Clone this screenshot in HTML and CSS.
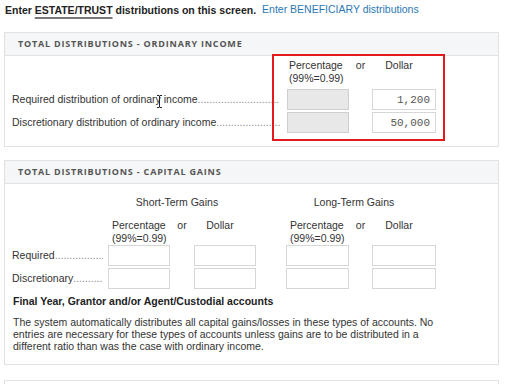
FILE: index.html
```html
<!DOCTYPE html>
<html lang="en">
<head>
    <meta charset="UTF-8">
    <title>Distributions</title>
    <link rel="stylesheet" href="styles.css">
</head>
<body>
<div class="page">
    <p class="intro"><b>Enter <span class="uline">ESTATE/TRUST</span> distributions on this screen.</b><a href="#">Enter BENEFICIARY distributions</a></p>

    <div class="panel">
        <div class="panel-head">TOTAL DISTRIBUTIONS - ORDINARY INCOME</div>
        <div class="panel-body ordinary">
            <div class="grid grid-ord">
                <span></span>
                <span class="col-pct">Percentage<br>(99%=0.99)</span>
                <span class="col-or">or</span>
                <span class="col-dol">Dollar</span>

                <label class="lead">Required distribution of ordinary income</label>
                <input type="text" class="pct" disabled>
                <span></span>
                <input type="text" value="1,200">

                <label class="lead">Discretionary distribution of ordinary income</label>
                <input type="text" class="pct" disabled>
                <span></span>
                <input type="text" value="50,000">
            </div>
            <div class="highlight"></div>
            <svg class="ibeam" width="7" height="13" viewBox="0 0 7 13"><path d="M1 .5h2l.5.5.5-.5h2M3.5 1v11M1 12.5h2l.5-.5.5.5h2" fill="none" stroke="#222" stroke-width="1"/></svg>
        </div>
    </div>

    <div class="panel">
        <div class="panel-head">TOTAL DISTRIBUTIONS - CAPITAL GAINS</div>
        <div class="panel-body">
            <div class="grid grid-cap">
                <span></span>
                <span class="group short">Short-Term Gains</span>
                <span></span>
                <span class="group long">Long-Term Gains</span>

                <span></span>
                <span class="col-pct">Percentage<br>(99%=0.99)</span>
                <span class="col-or">or</span>
                <span class="col-dol">Dollar</span>
                <span></span>
                <span class="col-pct">Percentage<br>(99%=0.99)</span>
                <span class="col-or">or</span>
                <span class="col-dol">Dollar</span>

                <label class="lead">Required</label>
                <input type="text">
                <span></span>
                <input type="text">
                <span></span>
                <input type="text">
                <span></span>
                <input type="text">

                <label class="lead">Discretionary</label>
                <input type="text">
                <span></span>
                <input type="text">
                <span></span>
                <input type="text">
                <span></span>
                <input type="text">
            </div>
            <h4>Final Year, Grantor and/or Agent/Custodial accounts</h4>
            <p class="note">The system automatically distributes all capital gains/losses in these types of accounts. No entries are necessary for these types of accounts unless gains are to be distributed in a different ratio than was the case with ordinary income.</p>
        </div>
    </div>

    <div class="panel panel-next"></div>
</div>
</body>
</html>
```

FILE: styles.css
```css
body {
    font-family: "Liberation Sans", Arial, sans-serif;
    font-size: 10.5px;
    color: #333;
    background: #fff;
    margin: 0;
    padding: 0;
}
.page {
    padding: 2px 0 0 4px;
    width: 495px;
}
.intro {
    margin: 0 0 14px 1px;
    line-height: 16px;
    color: #222;
}
.uline {
    text-decoration: underline;
    text-decoration-color: #777;
    text-decoration-thickness: 2px;
    text-underline-offset: 3px;
}
.intro a {
    color: #2b78b4;
    text-decoration: none;
    margin-left: 6px;
    position: relative;
    top: -1px;
}
.panel {
    border: 1px solid #e2e2e2;
    margin-bottom: 13px;
}
.panel-head {
    background: #f5f6f8;
    border-bottom: 1px solid #e2e2e2;
    height: 22px;
    line-height: 22px;
    padding-left: 13px;
    font-family: "Open Sans", sans-serif;
    font-weight: 700;
    font-size: 9px;
    letter-spacing: 0.8px;
    color: #555;
}
.panel-body {
    position: relative;
    padding: 12px 7px 12px;
}
.panel-body.ordinary {
    padding: 3px 7px 13px;
}
.grid {
    display: grid;
    line-height: 13px;
    align-items: center;
}
.grid-ord {
    grid-template-columns: 275px 62px 23px 64px;
    grid-template-rows: 28px 21px 21px;
    row-gap: 2px;
}
.grid-ord > .col-pct,
.grid-ord > .col-or,
.grid-ord > .col-dol {
    align-self: start;
}
.grid-cap {
    grid-template-columns: 96px 62px 24px 62px 30px 63px 23px 64px;
    grid-template-rows: 21px 24px 21px 21px;
    row-gap: 2px;
}
.grid-cap > .col-pct,
.grid-cap > .col-or,
.grid-cap > .col-dol,
.grid-cap > .group {
    align-self: start;
}
.grid-cap > .col-pct {
    padding-left: 4px;
}
.group {
    grid-column: span 3;
    text-align: center;
    padding-right: 10px;
}
.grid-cap .group.long {
    padding-right: 14px;
}
.col-pct {
    padding-left: 2px;
    white-space: nowrap;
}
.col-or {
    text-align: center;
}
.col-dol {
    text-align: center;
    padding-right: 10px;
}
.lead {
    display: flex;
    white-space: nowrap;
    overflow: hidden;
    padding-right: 7px;
}
.grid-cap .lead {
    padding-right: 5px;
}
.lead::after {
    content: "................................................................................................................................";
    flex: 1;
    overflow: hidden;
    color: #8a8a8a;
}
input {
    box-sizing: border-box;
    height: 21px;
    width: 100%;
    margin: 0;
    padding: 0 5px;
    border: 1px solid #d6d6d6;
    background: #fff;
    font-family: "Liberation Mono", "Courier New", monospace;
    font-size: 11px;
    color: #555;
    text-align: right;
}
input.pct {
    background: #e8e8e8;
    border-color: #cfcfcf;
}
.highlight {
    position: absolute;
    left: 267px;
    top: -2px;
    width: 169px;
    height: 83px;
    border: 2px solid #e3191c;
}
.ibeam {
    position: absolute;
    left: 151px;
    top: 39px;
}
h4 {
    margin: 6px 0 9px 1px;
    font-size: 10.5px;
    color: #222;
}
.note {
    margin: 0 0 0 1px;
    line-height: 12px;
    width: 430px;
}
.panel-next {
    height: 20px;
    margin-top: 15px;
}
```
